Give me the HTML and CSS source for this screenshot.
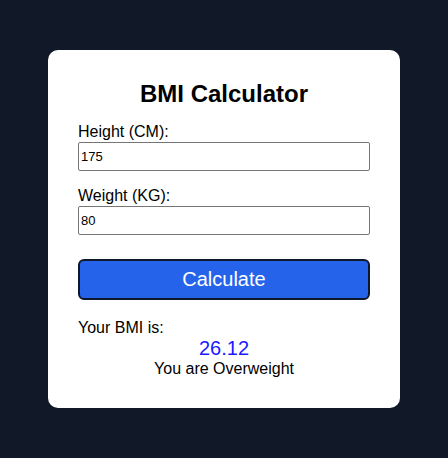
FILE: index.html
```html
<!DOCTYPE html>
<html>
<head>
<meta charset="utf-8">
<link rel="stylesheet" href="styles.css">
</head>
<body>
<div class="card">
  <h1 class="title">BMI Calculator</h1>
  <label class="label" for="h">Height (CM):</label>
  <input class="field" id="h" type="text" value="175">
  <label class="label" for="w">Weight (KG):</label>
  <input class="field" id="w" type="text" value="80">
  <button class="btn">Calculate</button>
  <div class="result">
    <div class="result-label">Your BMI is:</div>
    <div class="bmi">26.12</div>
    <div class="status">You are Overweight</div>
  </div>
</div>
</body>
</html>
```
FILE: styles.css
```css
html, body {
  margin: 0;
  height: 100%;
}
body {
  background: #111827;
  display: flex;
  align-items: center;
  justify-content: center;
  font-family: "Liberation Sans", Arial, sans-serif;
  color: #000;
}
.card {
  width: 352px;
  box-sizing: border-box;
  background: #fff;
  border-radius: 10px;
  padding: 30px;
  display: flex;
  flex-direction: column;
}
.title {
  margin: 0 0 15px;
  font-size: 24px;
  line-height: 28px;
  font-weight: bold;
  text-align: center;
}
.label {
  display: block;
  font-size: 16px;
  line-height: 18px;
}
.field {
  display: block;
  box-sizing: border-box;
  width: 100%;
  height: 29px;
  margin: 1px 0 16px;
  padding: 0 2px;
  font-family: "Liberation Sans", Arial, sans-serif;
  font-size: 13px;
  border: 1px solid #767676;
  border-radius: 2px;
  color: #000;
}
.btn {
  margin-top: 8px;
  height: 41px;
  width: 100%;
  background: #2563eb;
  color: #fff;
  border: 2px solid #0f172a;
  border-radius: 6px;
  font-family: "Liberation Sans", Arial, sans-serif;
  font-size: 20px;
  padding: 0;
}
.result {
  margin-top: 19px;
  font-size: 16px;
}
.result-label {
  line-height: 18px;
}
.bmi {
  text-align: center;
  color: #1a1aff;
  font-size: 20px;
  line-height: 23px;
}
.status {
  text-align: center;
  line-height: 18px;
}
```
